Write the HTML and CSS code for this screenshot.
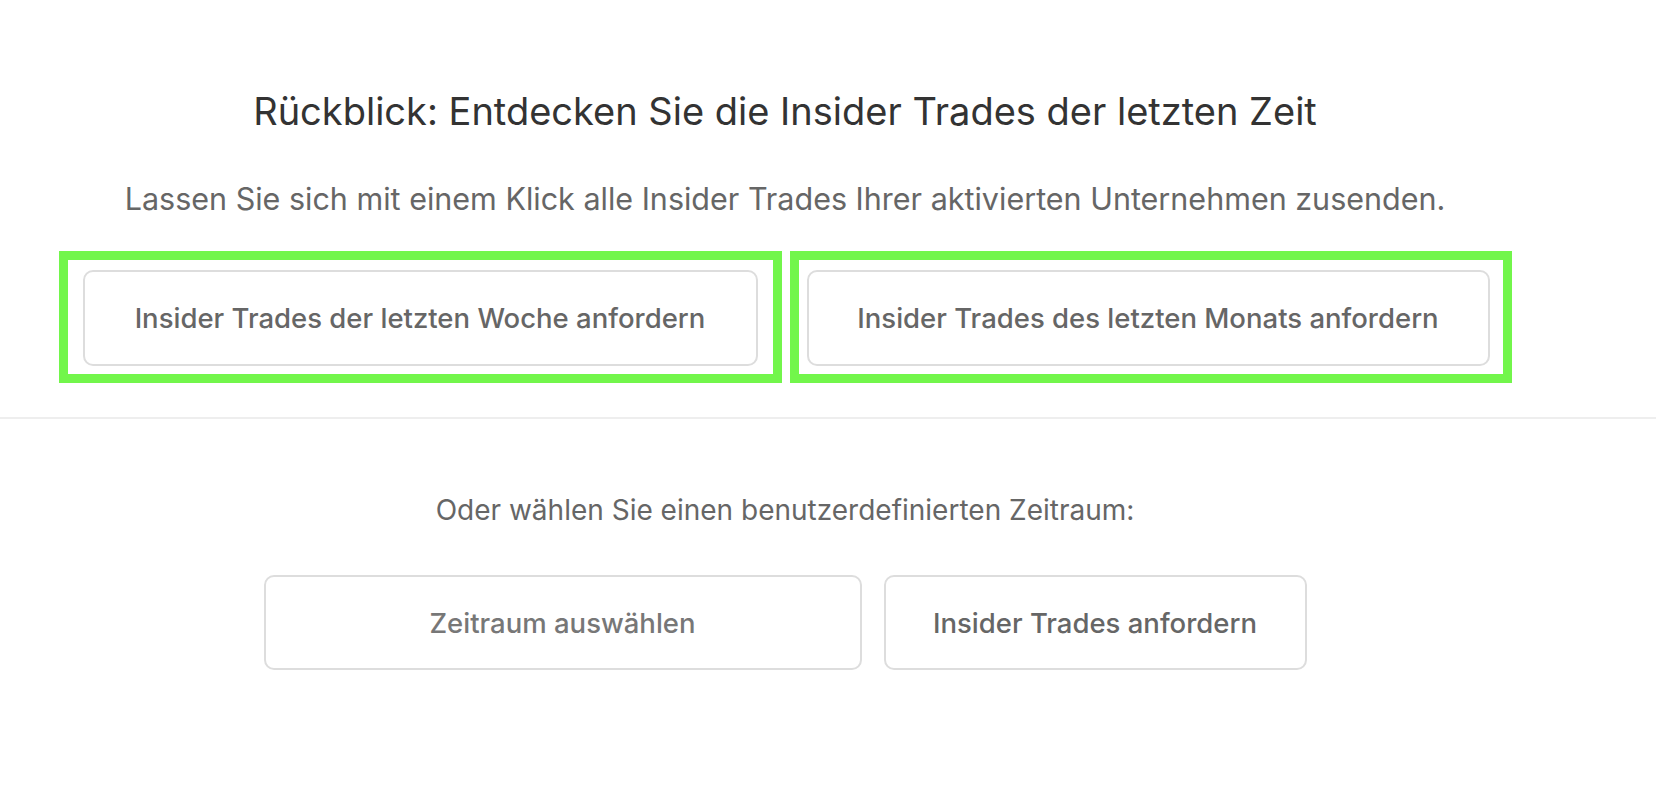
FILE: index.html
```html
<!DOCTYPE html>
<html lang="de">
<head>
<meta charset="utf-8">
<title>Rückblick</title>
<link rel="stylesheet" href="styles.css">
</head>
<body>
  <section class="recent">
    <h2 class="recent-title">Rückblick: Entdecken Sie die Insider Trades der letzten Zeit</h2>
    <p class="recent-lead">Lassen Sie sich mit einem Klick alle Insider Trades Ihrer aktivierten Unternehmen zusenden.</p>
    <div class="choices">
      <div class="highlight highlight-week">
        <button class="btn btn-week" type="button">Insider Trades der letzten Woche anfordern</button>
      </div>
      <div class="highlight highlight-month">
        <button class="btn btn-month" type="button">Insider Trades des letzten Monats anfordern</button>
      </div>
    </div>
  </section>
  <hr class="divider">
  <section class="custom">
    <p class="custom-lead">Oder wählen Sie einen benutzerdefinierten Zeitraum:</p>
    <div class="custom-actions">
      <button class="btn btn-range" type="button">Zeitraum auswählen</button>
      <button class="btn btn-request" type="button">Insider Trades anfordern</button>
    </div>
  </section>
</body>
</html>
```

FILE: styles.css
```css
* { box-sizing: border-box; }

html, body {
  margin: 0;
  padding: 0;
  background: #ffffff;
}

body {
  font-family: Inter, "Liberation Sans", Arial, sans-serif;
  color: #666666;
}

.recent,
.custom {
  width: 1570px;
  text-align: center;
}

.recent {
  padding-top: 89px;
}

.recent-title {
  margin: 0;
  font-size: 38px;
  line-height: 44px;
  font-weight: 400;
  color: #333333;
}

.recent-lead {
  margin: 48px 0 0;
  font-size: 30.5px;
  line-height: 36px;
  color: #666666;
}

.choices {
  margin-top: 34px;
  display: flex;
  justify-content: center;
  gap: 8px;
}

.highlight {
  border: 9px solid #72f64b;
}

.highlight-week {
  width: 723px;
  padding: 10px 15px 8px 15px;
}

.highlight-month {
  width: 722px;
  padding: 10px 13px 8px 8px;
}

.btn {
  display: flex;
  align-items: center;
  justify-content: center;
  height: 96px;
  padding: 0;
  background: #ffffff;
  border: 2px solid #dddddd;
  border-radius: 10px;
  font-family: inherit;
  font-size: 27.5px;
  font-weight: 500;
  color: #666666;
  cursor: pointer;
}

.btn-week { width: 675px; }
.btn-month { width: 683px; }

.divider {
  margin: 34px 0 0;
  border: 0;
  border-top: 2px solid #eeeeee;
  height: 0;
}

.custom-lead {
  margin: 74px 0 0;
  font-size: 28px;
  line-height: 34px;
  color: #666666;
}

.custom-actions {
  margin-top: 48px;
  display: flex;
  justify-content: center;
  gap: 22px;
}

.btn-range {
  width: 598px;
  height: 95px;
  color: #777777;
}

.btn-request {
  width: 423px;
  height: 95px;
}
```
